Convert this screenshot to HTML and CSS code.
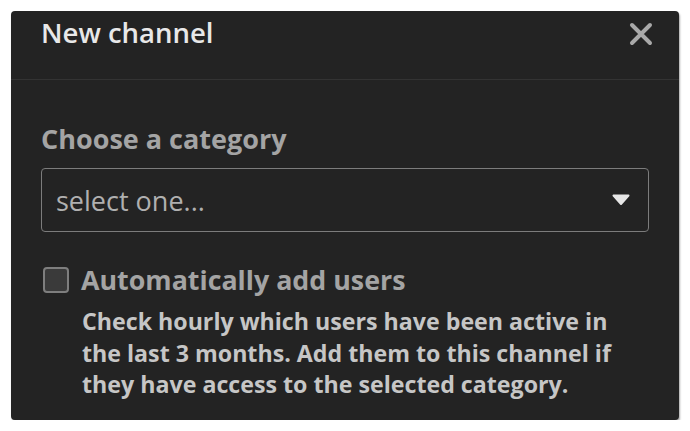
FILE: index.html
```html
<!DOCTYPE html>
<html lang="en">
<head>
<meta charset="utf-8">
<title>New channel</title>
<link rel="stylesheet" href="styles.css">
</head>
<body>
<div class="modal">
  <div class="modal-header">
    <h1 class="modal-title">New channel</h1>
    <button class="close-btn" aria-label="Close">
      <svg width="24" height="24" viewBox="0 0 24 24"><path d="M3 3 L21 21 M21 3 L3 21" stroke="#a9a9a9" stroke-width="4" stroke-linecap="round" fill="none"/></svg>
    </button>
  </div>
  <div class="modal-body">
    <div class="field-label">Choose a category</div>
    <div class="select">
      <span class="select-text">select one...</span>
      <svg class="caret" width="18" height="12" viewBox="0 0 18 12"><path d="M1.5 1.5 L16.5 1.5 L9 10 Z" fill="#e6e6e6" stroke="#e6e6e6" stroke-width="2" stroke-linejoin="round"/></svg>
    </div>
    <div class="check-row">
      <span class="checkbox"></span>
      <span class="check-label">Automatically add users</span>
    </div>
    <p class="description">Check hourly which users have been active in the last 3 months. Add them to this channel if they have access to the selected category.</p>
  </div>
</div>
</body>
</html>
```
FILE: styles.css
```css
html, body {
  margin: 0;
  padding: 0;
  background: #ffffff;
}
body {
  font-family: "Open Sans", "Noto Sans", sans-serif;
}
.modal {
  width: 668px;
  height: 409px;
  margin: 11px 0 0 11px;
  background: #232323;
  border-radius: 4px;
  box-shadow: 1px 2px 2px rgba(0,0,0,0.35);
  box-sizing: border-box;
}
.modal-header {
  height: 69px;
  box-sizing: border-box;
  border-bottom: 1px solid #333333;
  display: flex;
  align-items: center;
  justify-content: space-between;
  padding: 0 26px 0 30px;
}
.modal-title {
  margin: 0;
  font-size: 27.5px;
  font-weight: 600;
  color: #e8e8e8;
  line-height: 36px;
  padding-bottom: 25px;
}
.close-btn {
  background: none;
  border: 0;
  padding: 0;
  width: 24px;
  height: 24px;
  display: flex;
  margin-bottom: 22px;
}
.modal-body {
  padding: 41px 30px 0 30px;
}
.field-label {
  font-size: 27px;
  font-weight: 700;
  color: #a4a4a4;
  line-height: 36px;
}
.select {
  margin-top: 11px;
  width: 608px;
  height: 64px;
  box-sizing: border-box;
  border: 1.5px solid #7c7c7c;
  border-radius: 4px;
  display: flex;
  align-items: center;
  justify-content: space-between;
  padding: 0 18px 0 14px;
}
.select-text {
  font-size: 27px;
  color: #b0b0b0;
}
.caret {
  display: block;
}
.check-row {
  margin-top: 32px;
  display: flex;
  align-items: center;
  gap: 12px;
  padding-left: 2px;
}
.checkbox {
  width: 26px;
  height: 26px;
  box-sizing: border-box;
  border: 2px solid #7e7e7e;
  border-radius: 4px;
  background: #3a3a3a;
}
.check-label {
  font-size: 26.8px;
  font-weight: 700;
  color: #a4a4a4;
  line-height: 32px;
}
.description {
  margin: 10px 0 0 41px;
  font-size: 23.2px;
  font-weight: 700;
  color: #c6c6c6;
  line-height: 31.5px;
  width: 560px;
}
```
